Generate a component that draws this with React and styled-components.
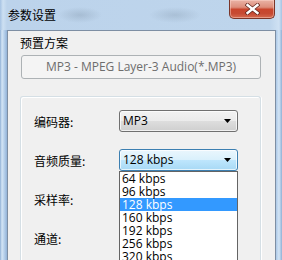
import React from 'react';
import styled, { createGlobalStyle, css } from 'styled-components';

const Global = createGlobalStyle`
  html, body { margin: 0; padding: 0; background: #fff; }
  body { font-family: "Open Sans", "Noto Sans CJK SC", sans-serif; }
  #root { width: 282px; height: 260px; }
`;

const Window = styled.div`
  width: 282px;
  height: 260px;
  overflow: hidden;
  display: flex;
  flex-direction: column;
  background: #b3cde9;
`;

const TitleBar = styled.div`
  flex: 0 0 30px;
  height: 30px;
  display: flex;
  align-items: flex-start;
  justify-content: space-between;
  padding: 0 7px 0 8px;
  box-sizing: border-box;
  background:
    radial-gradient(ellipse 22px 8px at 80px 15px, rgba(110, 130, 150, 0.28), transparent),
    radial-gradient(ellipse 26px 8px at 175px 15px, rgba(110, 130, 150, 0.25), transparent),
    linear-gradient(90deg, #a6c3e3 0px, #cde0f2 3px, #bcd3eb 7px, #bed5ec 270px, #cfe1f3 279px, #a6c3e3 282px);
`;

const Title = styled.span`
  margin-top: 7px;
  font: 12px/16px "Noto Sans CJK SC", sans-serif;
  color: #000;
`;

const CloseButton = styled.div`
  width: 46px;
  height: 19px;
  box-sizing: border-box;
  border: 1px solid #7a3529;
  border-top: none;
  border-radius: 0 0 5px 5px;
  background: linear-gradient(180deg, #eab3a6 0%, #dd8e7c 40%, #c9452d 52%, #c64a33 75%, #d56a4f 100%);
  box-shadow: inset 0 0 0 1px rgba(255, 220, 210, 0.45);
  display: flex;
  align-items: center;
  justify-content: center;
`;

const Frame = styled.div`
  flex: 1;
  display: flex;
  padding: 0 7px;
  background:
    linear-gradient(90deg, #8fb0d6 0px, #d4e5f5 2px, #b9d2ec 4px, #93b3d8 7px) left top / 7px 100% no-repeat,
    linear-gradient(90deg, #93b3d8 0px, #b9d2ec 3px, #d4e5f5 5px, #8fb0d6 8px) right top / 8px 100% no-repeat,
    #b3cde9;
`;

const Client = styled.div`
  flex: 1;
  background: #f0f0f0;
  border: 1px solid #7d8ea3;
  border-bottom: none;
  padding: 4px 14px 0 13px;
  display: flex;
  flex-direction: column;
`;

const SectionLabel = styled.div`
  font: 12px/16px "Noto Sans CJK SC", sans-serif;
  color: #000;
  margin-left: -1px;
`;

const PresetCombo = styled.div`
  margin-top: 4px;
  height: 24px;
  box-sizing: border-box;
  border: 1px solid #adb2b5;
  border-radius: 3px;
  background: #f4f4f4;
  display: flex;
  align-items: center;
  justify-content: center;
  font: 12px/16px "Open Sans", sans-serif;
  color: #6d6d6d;
`;

const GroupBox = styled.div`
  margin: 17px 0 0 -1px;
  width: 241px;
  flex: 1;
  box-sizing: border-box;
  border: 1px solid #d5dfe5;
  border-bottom: none;
  border-radius: 3px 3px 0 0;
  box-shadow: inset 1px 1px 0 #fff, 1px 0 0 #fff;
  padding: 13px 0 0 13px;
`;

const FormGrid = styled.div`
  display: grid;
  grid-template-columns: 85px 119px;
  grid-auto-rows: 22px;
  row-gap: 17px;
  align-items: center;
`;

const FieldLabel = styled.div`
  font: 12px/16px "Noto Sans CJK SC", sans-serif;
  color: #000;
  padding-top: 1px;
`;

const ComboWrap = styled.div`
  position: relative;
  height: 22px;
`;

const Combo = styled.div`
  height: 22px;
  box-sizing: border-box;
  border: 1px solid #707070;
  border-radius: 3px;
  display: flex;
  align-items: center;
  justify-content: space-between;
  padding: 0 6px 0 3px;
  font: 12px/16px "Open Sans", sans-serif;
  color: #000;
  background: linear-gradient(180deg, #f2f2f2 0%, #ebebeb 50%, #dddddd 51%, #cfcfcf 100%);
  box-shadow: inset 0 0 0 1px rgba(255, 255, 255, 0.7);
  ${(p) =>
    p.$hot &&
    css`
      border-color: #3c7fb1;
      background: linear-gradient(180deg, #eaf6fd 0%, #d9f0fc 50%, #bee6fd 51%, #a7d9f5 100%);
    `}
`;

const Arrow = () => (
  <svg width="7" height="4" viewBox="0 0 7 4">
    <path d="M0 0 H7 L3.5 4 Z" fill="#000" />
  </svg>
);

const DropList = styled.div`
  position: absolute;
  top: 100%;
  left: 0;
  width: 119px;
  box-sizing: border-box;
  border: 1px solid #646464;
  border-bottom: none;
  background: #fff;
  z-index: 2;
`;

const Option = styled.div`
  height: 13px;
  line-height: 13px;
  padding-left: 2px;
  font: 12px/13px "Open Sans", sans-serif;
  color: #000;
  white-space: nowrap;
  ${(p) =>
    p.$selected &&
    css`
      background: #3399ff;
      color: #fff;
    `}
`;

const rates = ['64 kbps', '96 kbps', '128 kbps', '160 kbps', '192 kbps', '256 kbps', '320 kbps'];

export default function App() {
  return (
    <>
      <Global />
      <Window>
        <TitleBar>
          <Title>参数设置</Title>
          <CloseButton>
            <svg width="15" height="12" viewBox="0 0 15 12">
              <path d="M2.5 2 L12.5 10 M12.5 2 L2.5 10" stroke="#5a2018" strokeWidth="3.8" strokeLinecap="square" />
              <path d="M2.5 2 L12.5 10 M12.5 2 L2.5 10" stroke="#fff" strokeWidth="2.4" strokeLinecap="square" />
            </svg>
          </CloseButton>
        </TitleBar>
        <Frame>
          <Client>
            <SectionLabel>预置方案</SectionLabel>
            <PresetCombo>MP3 - MPEG Layer-3 Audio(*.MP3)</PresetCombo>
            <GroupBox>
              <FormGrid>
                <FieldLabel>编码器:</FieldLabel>
                <ComboWrap>
                  <Combo>
                    <span>MP3</span>
                    <Arrow />
                  </Combo>
                </ComboWrap>
                <FieldLabel>音频质量:</FieldLabel>
                <ComboWrap>
                  <Combo $hot>
                    <span>128 kbps</span>
                    <Arrow />
                  </Combo>
                  <DropList>
                    {rates.map((r) => (
                      <Option key={r} $selected={r === '128 kbps'}>
                        {r}
                      </Option>
                    ))}
                  </DropList>
                </ComboWrap>
                <FieldLabel>采样率:</FieldLabel>
                <ComboWrap />
                <FieldLabel>通道:</FieldLabel>
                <ComboWrap />
              </FormGrid>
            </GroupBox>
          </Client>
        </Frame>
      </Window>
    </>
  );
}
